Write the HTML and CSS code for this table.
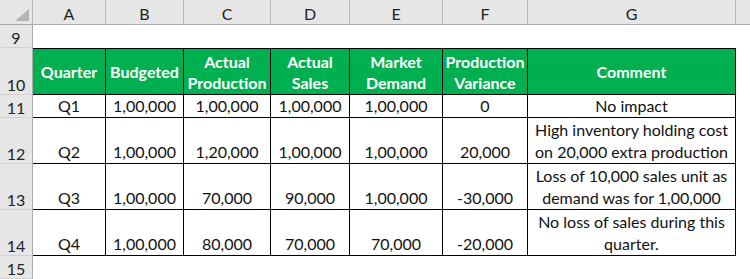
FILE: index.html
```html
<!DOCTYPE html>
<html lang="en">
<head>
  <meta charset="UTF-8">
  <meta name="viewport" content="width=device-width, initial-scale=1.0">
  <title>Production Variance</title>
  <link rel="stylesheet" href="styles.css">
</head>
<body>
  <div class="sheet">
    <!-- column headers -->
    <div class="corner">
      <svg class="corner-mark" viewBox="0 0 14 12"><polygon points="14,0 14,12 0,12" /></svg>
    </div>
    <div class="col-head">A</div>
    <div class="col-head">B</div>
    <div class="col-head">C</div>
    <div class="col-head">D</div>
    <div class="col-head">E</div>
    <div class="col-head">F</div>
    <div class="col-head">G</div>
    <div class="col-head last"></div>

    <!-- row 9 -->
    <div class="row-head">9</div>
    <div class="blank span-all"></div>

    <!-- row 10 -->
    <div class="row-head">10</div>
    <div class="th first">Quarter</div>
    <div class="th">Budgeted</div>
    <div class="th">Actual<br>Production</div>
    <div class="th">Actual<br>Sales</div>
    <div class="th">Market<br>Demand</div>
    <div class="th">Production<br>Variance</div>
    <div class="th">Comment</div>
    <div class="blank"></div>

    <!-- row 11 -->
    <div class="row-head">11</div>
    <div class="td first">Q1</div>
    <div class="td">1,00,000</div>
    <div class="td">1,00,000</div>
    <div class="td">1,00,000</div>
    <div class="td">1,00,000</div>
    <div class="td">0</div>
    <div class="td">No impact</div>
    <div class="blank"></div>

    <!-- row 12 -->
    <div class="row-head">12</div>
    <div class="td first">Q2</div>
    <div class="td">1,00,000</div>
    <div class="td">1,20,000</div>
    <div class="td">1,00,000</div>
    <div class="td">1,00,000</div>
    <div class="td">20,000</div>
    <div class="td">High inventory holding cost<br>on 20,000 extra production</div>
    <div class="blank"></div>

    <!-- row 13 -->
    <div class="row-head">13</div>
    <div class="td first">Q3</div>
    <div class="td">1,00,000</div>
    <div class="td">70,000</div>
    <div class="td">90,000</div>
    <div class="td">1,00,000</div>
    <div class="td">-30,000</div>
    <div class="td">Loss of 10,000 sales unit as<br>demand was for 1,00,000</div>
    <div class="blank"></div>

    <!-- row 14 -->
    <div class="row-head">14</div>
    <div class="td first">Q4</div>
    <div class="td">1,00,000</div>
    <div class="td">80,000</div>
    <div class="td">70,000</div>
    <div class="td">70,000</div>
    <div class="td">-20,000</div>
    <div class="td">No loss of sales during this<br>quarter.</div>
    <div class="blank"></div>

    <!-- row 15 -->
    <div class="row-head">15</div>
    <div class="blank span-all"></div>
  </div>
</body>
</html>
```

FILE: styles.css
```css
body {
  margin: 0;
  background-color: white;
  font-family: Lato, "Open Sans", sans-serif;
  font-size: 16px;
  color: #111;
}
.sheet {
  display: grid;
  grid-template-columns: 33px 73px 78px 87px 79px 93px 85px 208px 1fr;
  grid-template-rows: 25px 23px 47px 23px 46px 46px 46px 23px;
  width: 750px;
  height: 279px;
  overflow: hidden;
}
.sheet > div {
  box-sizing: border-box;
}
.corner {
  background-color: #e6e6e6;
  border-right: 1px solid #bcbcbc;
  border-bottom: 1px solid #ababab;
  display: flex;
  align-items: flex-end;
  justify-content: flex-end;
  padding: 0 3px 3px 0;
}
.corner-mark {
  width: 14px;
  height: 12px;
  fill: #b4b4b4;
}
.col-head {
  background-color: #e6e6e6;
  border-right: 1px solid #bcbcbc;
  border-bottom: 1px solid #ababab;
  display: flex;
  align-items: center;
  justify-content: center;
  color: #222;
  font-size: 16px;
  padding-top: 2px;
}
.col-head.last {
  border-right: none;
}
.row-head {
  background-color: #e6e6e6;
  border-right: 1px solid #ababab;
  border-bottom: 1px solid #d2d2d2;
  display: flex;
  align-items: flex-end;
  justify-content: center;
  color: #222;
  font-size: 16px;
  padding-bottom: 0;
}
.blank {
  background-color: white;
}
.span-all {
  grid-column: 2 / -1;
}
.th {
  background-color: #00b050;
  color: white;
  font-weight: bold;
  text-align: center;
  line-height: 21px;
  border-top: 1px solid #000;
  border-right: 1px solid #000;
  border-bottom: 1px solid #000;
  display: flex;
  align-items: center;
  justify-content: center;
}
.td {
  text-align: center;
  line-height: 22px;
  border-right: 1px solid #000;
  border-bottom: 1px solid #000;
  display: flex;
  align-items: flex-end;
  justify-content: center;
  padding-bottom: 0;
}
```
